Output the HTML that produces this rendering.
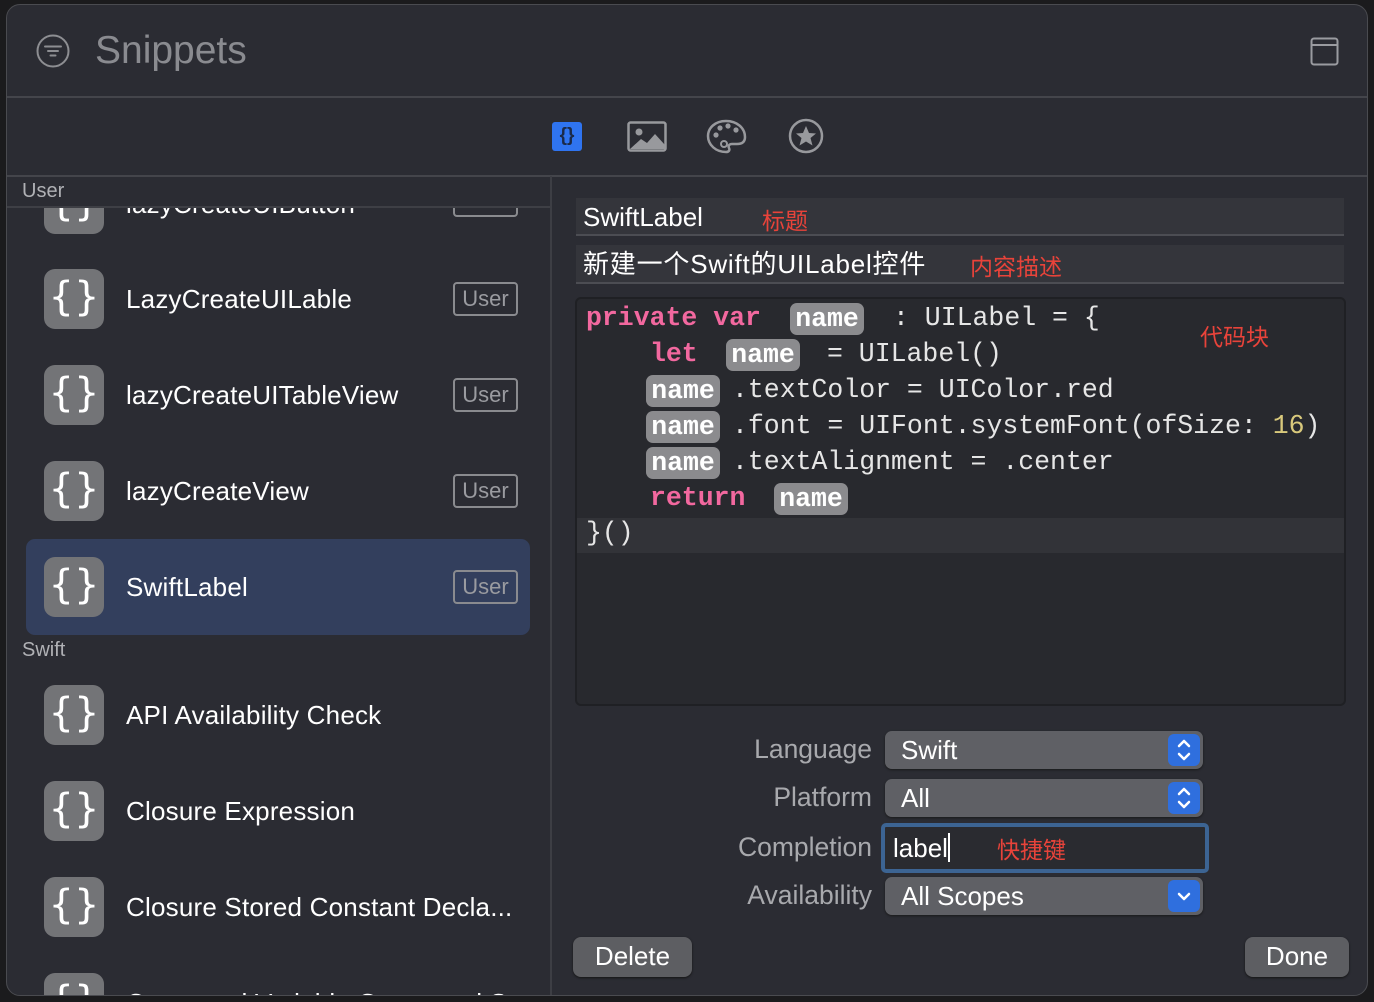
<!DOCTYPE html>
<html><head><meta charset="utf-8">
<style>
*{margin:0;padding:0;box-sizing:border-box}
body{width:1374px;height:1002px;background:#1b1b1d;position:relative;overflow:hidden;font-family:"Liberation Sans","Noto Sans CJK SC",sans-serif;color:#fff}
.win{position:absolute;left:6px;top:4px;width:1362px;height:992px;background:#2b2c33;border:1px solid #4a4b50;border-radius:14px;overflow:hidden}
.a{position:absolute;white-space:nowrap}
.hl{position:absolute;height:2px;background:#44454b}
.icon{position:absolute;left:37px;width:60px;height:60px;background:#737477;border-radius:11px;color:#fff;font-size:40px;text-align:center;line-height:56px;font-family:"DejaVu Sans",sans-serif}
.rt{position:absolute;left:119px;font-size:26px;color:#fff;line-height:30px;letter-spacing:0.2px}
.badge{position:absolute;left:446px;width:65px;height:34px;border:2px solid #8a8b8f;border-radius:4px;color:#9a9ba0;font-size:22px;text-align:center;line-height:30px}
.mono{font-family:"Liberation Mono","DejaVu Sans Mono",monospace;font-size:26.5px;line-height:32px}
.kw{color:#f2689f;font-weight:bold}
.pill{position:absolute;height:32px;background:#8b8b8e;border-radius:7px;color:#fff;font-weight:bold;text-align:center}
.red{color:#e8433a;font-size:23px}
.lab{position:absolute;right:495px;font-size:26.5px;color:#a8a9ad}
.pop{position:absolute;left:878px;width:318px;height:38px;background:#5f6065;border-radius:7px;box-shadow:0 1px 2px #1a1a1a;font-size:26px;line-height:38px;padding-left:16px}
.step{position:absolute;right:3px;top:3px;width:32px;height:32px;background:#2f6fde;border-radius:6px}
.btn{position:absolute;height:40px;background:#5d5e62;border-radius:8px;font-size:26px;line-height:38px;text-align:center;box-shadow:0 1px 2px #151515}
</style></head><body>
<div class="win">
  <svg class="a" style="left:29px;top:29px" width="34" height="34" viewBox="0 0 34 34"><circle cx="17" cy="17" r="15.5" fill="none" stroke="#8d8e92" stroke-width="2"/><path d="M9 12.5h16M12 17h10M14.5 21.5h5" stroke="#8d8e92" stroke-width="2" stroke-linecap="round"/></svg>
  <div class="a" style="left:88px;top:24px;font-size:39px;color:#8a8b90">Snippets</div>
  <svg class="a" style="left:1303px;top:32px" width="30" height="30" viewBox="0 0 30 30"><rect x="1.5" y="1.5" width="26" height="26" rx="2.5" fill="none" stroke="#9a9ba0" stroke-width="2"/><path d="M1.5 8h26" stroke="#9a9ba0" stroke-width="2"/></svg>
  <div class="hl" style="left:0;top:91px;width:1362px"></div>
  <div class="a" style="left:545px;top:117px;width:30px;height:29px;background:#2f74f0;border-radius:3px;color:#1b2a48;font-size:19px;font-weight:bold;text-align:center;line-height:28px">{}</div>
  <svg class="a" style="left:620px;top:116px" width="40" height="31" viewBox="0 0 40 31"><rect x="1.5" y="1.5" width="37" height="28" rx="2" fill="none" stroke="#98999d" stroke-width="2.5"/><circle cx="12" cy="11" r="3.5" fill="#98999d"/><path d="M3 28 L14 18 L20 22 L28 13 L38 24 V28Z" fill="#98999d"/></svg>
  <svg class="a" style="left:699px;top:114px" width="41" height="35" viewBox="0 0 41 35"><path d="M20 2C9 2 2 9 2 17c0 9 8 16 18 16 3 0 4-2 3-4-1-2 0-4 3-4h5c6 0 8-3 8-7C39 9 31 2 20 2z" fill="none" stroke="#98999d" stroke-width="2.5"/><circle cx="10" cy="16" r="2.6" fill="#98999d"/><circle cx="14" cy="9" r="2.6" fill="#98999d"/><circle cx="22" cy="7" r="2.6" fill="#98999d"/><circle cx="30" cy="11" r="2.6" fill="#98999d"/><circle cx="18" cy="25" r="3" fill="none" stroke="#98999d" stroke-width="2"/></svg>
  <svg class="a" style="left:781px;top:113px" width="36" height="36" viewBox="0 0 36 36"><circle cx="18" cy="18" r="16" fill="none" stroke="#98999d" stroke-width="2.5"/><path d="M18 8l3 7 7 .5-5.5 4.5 2 7.5L18 23.5 11.5 27.5l2-7.5L8 15.5l7-.5z" fill="#98999d"/></svg>
  <div class="hl" style="left:0;top:170px;width:1362px"></div>
  <div class="a" style="left:543px;top:171px;width:2px;height:830px;background:#3d3e44"></div>
  <div class="a" style="left:0;top:172px;width:543px;height:830px;overflow:hidden">
    <div class="icon" style="top:-3px">{}</div>
    <div class="rt" style="top:12px">lazyCreateUIButton</div>
    <div class="badge" style="top:6px">User</div>
    <div class="a" style="left:0;top:0;width:543px;height:31px;background:#2b2c33;border-bottom:2px solid #3e3f45"></div>
    <div class="a" style="left:15px;top:3px;font-size:20px;color:#b0b1b5">User</div>
    <div class="icon" style="top:92px">{}</div><div class="rt" style="top:107px">LazyCreateUILable</div><div class="badge" style="top:105px">User</div>
    <div class="icon" style="top:188px">{}</div><div class="rt" style="top:203px">lazyCreateUITableView</div><div class="badge" style="top:201px">User</div>
    <div class="icon" style="top:284px">{}</div><div class="rt" style="top:299px">lazyCreateView</div><div class="badge" style="top:297px">User</div>
    <div class="a" style="left:19px;top:362px;width:504px;height:96px;background:#333f5d;border-radius:9px"></div>
    <div class="icon" style="top:380px">{}</div><div class="rt" style="top:395px">SwiftLabel</div><div class="badge" style="top:393px">User</div>
    <div class="a" style="left:15px;top:462px;font-size:20px;color:#b0b1b5">Swift</div>
    <div class="icon" style="top:508px">{}</div><div class="rt" style="top:523px">API Availability Check</div>
    <div class="icon" style="top:604px">{}</div><div class="rt" style="top:619px">Closure Expression</div>
    <div class="icon" style="top:700px">{}</div><div class="rt" style="top:715px">Closure Stored Constant Decla...</div>
    <div class="icon" style="top:796px">{}</div><div class="rt" style="top:811px">Computed Variable Getter and S...</div>
  </div>
  <div class="a" style="left:569px;top:193px;width:768px;height:38px;background:#34353b;border-bottom:2px solid #4c4d53"></div>
  <div class="a" style="left:576px;top:197px;font-size:26px;line-height:30px">SwiftLabel</div>
  <div class="a red" style="left:755px;top:197px">标题</div>
  <div class="a" style="left:569px;top:240px;width:768px;height:39px;background:#34353b;border-bottom:2px solid #4c4d53"></div>
  <div class="a" style="left:576px;top:244px;font-size:26px;line-height:30px;letter-spacing:0.8px">新建一个Swift的UILabel控件</div>
  <div class="a red" style="left:963px;top:243px">内容描述</div>
  <div class="a" style="left:568px;top:292px;width:771px;height:409px;background:#28292e;border:2px solid #1f2024;border-radius:6px;overflow:hidden">
    <div class="a" style="left:0;top:219px;width:771px;height:35px;background:#323338"></div>
  </div>
  <div class="a mono" style="left:0;top:0;width:1362px;height:600px;color:#e6e6e6">
    <span class="a kw" style="left:579px;top:297px">private var</span>
    <span class="pill" style="left:783px;top:298px;width:74px">name</span>
    <span class="a" style="left:886px;top:297px">: UILabel = {</span>
    <span class="a kw" style="left:643px;top:333px">let</span>
    <span class="pill" style="left:719px;top:334px;width:74px">name</span>
    <span class="a" style="left:820px;top:333px">= UILabel()</span>
    <span class="pill" style="left:639px;top:370px;width:74px">name</span>
    <span class="a" style="left:725px;top:369px">.textColor = UIColor.red</span>
    <span class="pill" style="left:639px;top:406px;width:74px">name</span>
    <span class="a" style="left:725px;top:405px">.font = UIFont.systemFont(ofSize: <span style="color:#d9c97c">16</span>)</span>
    <span class="pill" style="left:639px;top:442px;width:74px">name</span>
    <span class="a" style="left:725px;top:441px">.textAlignment = .center</span>
    <span class="a kw" style="left:643px;top:477px">return</span>
    <span class="pill" style="left:767px;top:478px;width:74px">name</span>
    <span class="a" style="left:579px;top:512px">}()</span>
  </div>
  <div class="a red" style="left:1193px;top:313px">代码块</div>
  <div class="lab" style="top:729px">Language</div>
  <div class="pop" style="top:726px">Swift<div class="step"><svg width="32" height="32" viewBox="0 0 32 32"><path d="M11 12l5-5 5 5M11 20l5 5 5-5" fill="none" stroke="#fff" stroke-width="2.5" stroke-linecap="round" stroke-linejoin="round"/></svg></div></div>
  <div class="lab" style="top:777px">Platform</div>
  <div class="pop" style="top:774px">All<div class="step"><svg width="32" height="32" viewBox="0 0 32 32"><path d="M11 12l5-5 5 5M11 20l5 5 5-5" fill="none" stroke="#fff" stroke-width="2.5" stroke-linecap="round" stroke-linejoin="round"/></svg></div></div>
  <div class="lab" style="top:827px">Completion</div>
  <div class="a" style="left:874px;top:818px;width:328px;height:50px;border:4px solid #3c6493;border-radius:5px;background:#2a2b30"></div>
  <div class="a" style="left:886px;top:827px;font-size:26px;line-height:32px">label<span style="display:inline-block;width:2px;height:29px;background:#fff;vertical-align:-5px"></span></div>
  <div class="a red" style="left:990px;top:826px">快捷键</div>
  <div class="lab" style="top:875px">Availability</div>
  <div class="pop" style="top:872px">All Scopes<div class="step"><svg width="32" height="32" viewBox="0 0 32 32"><path d="M11 14l5 5 5-5" fill="none" stroke="#fff" stroke-width="2.5" stroke-linecap="round" stroke-linejoin="round"/></svg></div></div>
  <div class="btn" style="left:566px;top:932px;width:119px">Delete</div>
  <div class="btn" style="left:1238px;top:932px;width:104px">Done</div>
</div>
</body></html>
